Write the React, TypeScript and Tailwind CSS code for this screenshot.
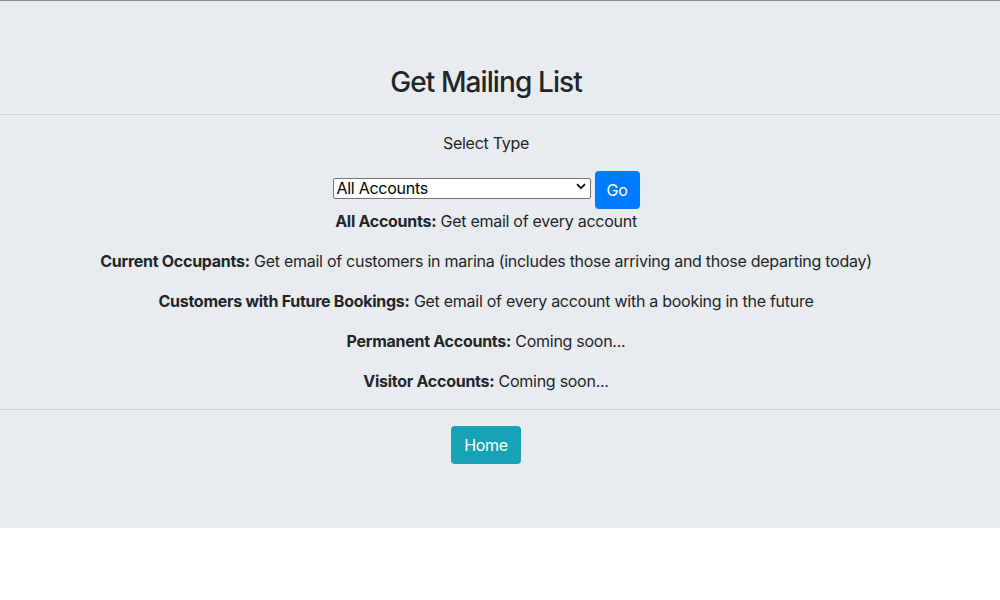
import { useState } from 'react';

const types = [
  { label: 'All Accounts', text: 'Get email of every account' },
  { label: 'Current Occupants', text: 'Get email of customers in marina (includes those arriving and those departing today)' },
  { label: 'Customers with Future Bookings', text: 'Get email of every account with a booking in the future' },
  { label: 'Permanent Accounts', text: 'Coming soon...' },
  { label: 'Visitor Accounts', text: 'Coming soon...' },
];

export default function App() {
  const [selected, setSelected] = useState('all');

  return (
    <div className="min-h-[600px] bg-white text-[#212529] font-['Inter','Liberation_Sans',sans-serif] tracking-[-0.27px]">
      <div className="bg-[#e9ecef] border-t border-[#8f8f8f] pt-[64px] pb-[64px]">
        <h3 className="pr-[28px] text-center text-[28px] leading-[34px] font-medium tracking-[-0.9px]">Get Mailing List</h3>
        <hr className="mt-[15px] border-0 border-t border-[#cfd3d7]" />

        <div className="pr-[28px] flex flex-col items-center">
          <p className="mt-[16px] text-base leading-6">Select Type</p>

          <div className="mt-[16px] flex items-center gap-[4px]">
            <div className="relative mt-[-5px]">
              <select
                value={selected}
                onChange={(e) => setSelected(e.target.value)}
                className="appearance-none w-[258px] h-[21px] bg-white border border-[#767676] rounded-[2px] pl-[3px] text-base leading-[19px] text-black"
              >
                <option value="all">All Accounts</option>
                <option value="current">Current Occupants</option>
                <option value="future">Customers with Future Bookings</option>
                <option value="permanent">Permanent Accounts</option>
                <option value="visitor">Visitor Accounts</option>
              </select>
              <svg
                className="pointer-events-none absolute right-[5px] top-[7px]"
                width="10"
                height="7"
                viewBox="0 0 10 7"
              >
                <path d="M1 1.2 L5 5.2 L9 1.2" fill="none" stroke="#111" strokeWidth="1.8" />
              </svg>
            </div>
            <button className="h-[38px] px-[12px] rounded-[4px] bg-[#007bff] text-white text-base leading-6">
              Go
            </button>
          </div>

          <div className="text-center text-base leading-6">
            {types.map((t) => (
              <p key={t.label} className="mb-[16px] last:mb-0">
                <b className="font-bold">{t.label}:</b> {t.text}
              </p>
            ))}
          </div>
        </div>

        <hr className="mt-[16px] border-0 border-t border-[#cfd3d7]" />

        <div className="pr-[28px] mt-[16px] flex justify-center">
          <button className="h-[38px] px-[13px] rounded-[4px] bg-[#17a2b8] text-white text-base leading-6">
            Home
          </button>
        </div>
      </div>
    </div>
  );
}
